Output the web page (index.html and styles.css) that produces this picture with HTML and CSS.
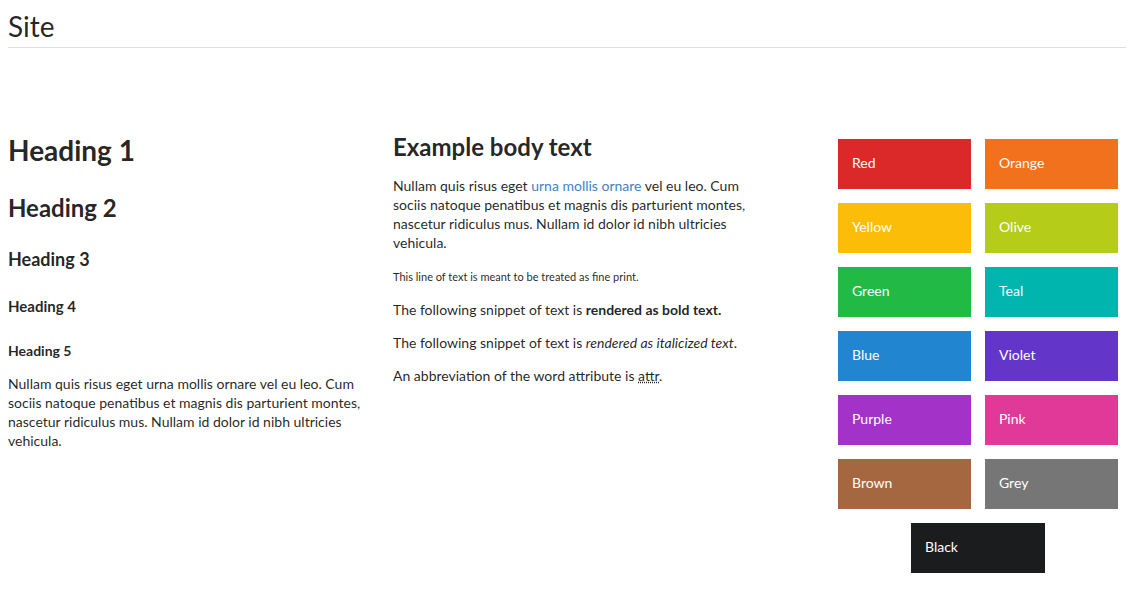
FILE: index.html
```html
<!DOCTYPE html>
<html>
<head>
<meta charset="utf-8">
<title>Site</title>
<link rel="stylesheet" href="styles.css">
</head>
<body>
<header class="site-header">
  <h1 class="site-title">Site</h1>
</header>
<main class="main-row">
  <section class="col col-headings">
    <h1 class="h1">Heading 1</h1>
    <h2 class="h2">Heading 2</h2>
    <h3 class="h3">Heading 3</h3>
    <h4 class="h4">Heading 4</h4>
    <h5 class="h5">Heading 5</h5>
    <p class="body-p">Nullam quis risus eget urna mollis ornare vel eu leo. Cum sociis natoque penatibus et magnis dis parturient montes, nascetur ridiculus mus. Nullam id dolor id nibh ultricies vehicula.</p>
  </section>
  <section class="col col-body">
    <h2 class="body-title">Example body text</h2>
    <p class="body-p first">Nullam quis risus eget <a href="#" class="link">urna mollis ornare</a> vel eu leo. Cum sociis natoque penatibus et magnis dis parturient montes, nascetur ridiculus mus. Nullam id dolor id nibh ultricies vehicula.</p>
    <p class="fine"><small>This line of text is meant to be treated as fine print.</small></p>
    <p class="body-p">The following snippet of text is <strong>rendered as bold text.</strong></p>
    <p class="body-p">The following snippet of text is <em>rendered as italicized text</em>.</p>
    <p class="body-p">An abbreviation of the word attribute is <abbr title="attribute">attr</abbr>.</p>
  </section>
  <section class="col col-colors">
    <div class="swatches">
      <div class="swatch red">Red</div>
      <div class="swatch orange">Orange</div>
      <div class="swatch yellow">Yellow</div>
      <div class="swatch olive">Olive</div>
      <div class="swatch green">Green</div>
      <div class="swatch teal">Teal</div>
      <div class="swatch blue">Blue</div>
      <div class="swatch violet">Violet</div>
      <div class="swatch purple">Purple</div>
      <div class="swatch pink">Pink</div>
      <div class="swatch brown">Brown</div>
      <div class="swatch grey">Grey</div>
      <div class="swatch black">Black</div>
    </div>
  </section>
</main>
</body>
</html>
```
FILE: styles.css
```css
html, body {
  margin: 0;
  padding: 0;
}
body {
  margin: 8px;
  font-family: Lato, "Liberation Sans", sans-serif;
  font-size: 14px;
  line-height: 19px;
  color: rgba(0, 0, 0, 0.87);
  background: #fff;
}
.site-header {
  width: calc(100% + 8px);
  border-bottom: 1px solid #dedede;
  padding-bottom: 3px;
}
.site-title {
  margin: 0;
  font-size: 28px;
  line-height: 36px;
  font-weight: 400;
}
.main-row {
  display: flex;
  align-items: flex-start;
  margin-top: 84px;
}
.col-headings {
  width: 370px;
  margin-right: 15px;
}
.col-body {
  width: 370px;
  margin-right: 75px;
}
.col-colors {
  width: 280px;
  padding-top: 7px;
}
h1, h2, h3, h4, h5, p {
  margin: 0;
}
.h1 {
  font-size: 28px;
  line-height: 36px;
  font-weight: 700;
}
.h2 {
  font-size: 24px;
  line-height: 30px;
  font-weight: 700;
  margin-top: 25px;
}
.h3 {
  font-size: 18px;
  line-height: 24px;
  font-weight: 700;
  margin-top: 24px;
}
.h4 {
  font-size: 15px;
  line-height: 20px;
  font-weight: 700;
  margin-top: 25px;
}
.h5 {
  font-size: 14px;
  line-height: 18px;
  font-weight: 700;
  margin-top: 26px;
}
.col-headings .body-p {
  margin-top: 14px;
}
.body-title {
  font-size: 24px;
  line-height: 30px;
  font-weight: 700;
}
.col-body .body-p {
  margin-top: 14px;
}
.col-body .body-p.first {
  margin-top: 14px;
}
.fine {
  margin-top: 16px;
  line-height: 15px;
}
.fine small {
  font-size: 11px;
}
.col-body .fine + .body-p {
  margin-top: 16px;
}
.link {
  color: #4183c4;
  text-decoration: none;
}
abbr {
  text-decoration: underline dotted;
}
.swatches {
  display: grid;
  grid-template-columns: 133px 133px;
  gap: 14px;
  justify-content: start;
}
.swatch {
  height: 50px;
  box-sizing: border-box;
  padding: 0 14px 4px;
  display: flex;
  align-items: center;
  color: #fff;
  font-size: 14px;
}
.swatch.black {
  grid-column: 1 / span 2;
  width: 134px;
  justify-self: center;
}
.red { background: #db2828; }
.orange { background: #f2711c; }
.yellow { background: #fbbd08; }
.olive { background: #b5cc18; }
.green { background: #21ba45; }
.teal { background: #00b5ad; }
.blue { background: #2185d0; }
.violet { background: #6435c9; }
.purple { background: #a333c8; }
.pink { background: #e03997; }
.brown { background: #a5673f; }
.grey { background: #767676; }
.black { background: #1b1c1d; }
```
